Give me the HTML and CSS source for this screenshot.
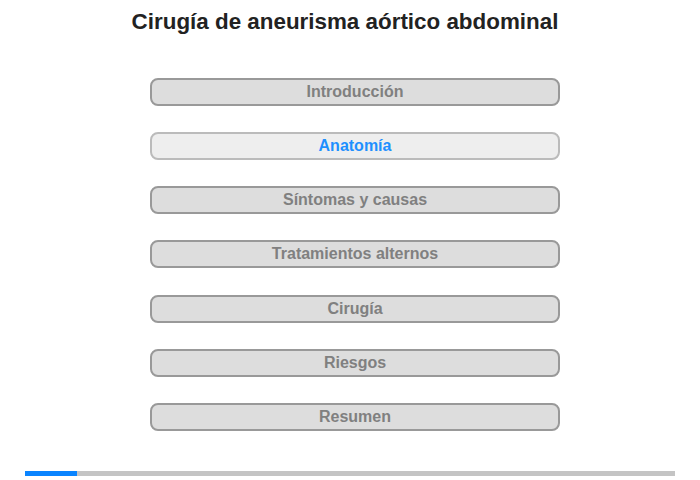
FILE: index.html
```html
<!DOCTYPE html>
<html lang="es">
<head>
<meta charset="utf-8">
<link rel="stylesheet" href="styles.css">
</head>
<body>
<div class="page">
  <h1 class="title">Cirugía de aneurisma aórtico abdominal</h1>
  <nav class="menu">
    <div class="item">Introducción</div>
    <div class="item active">Anatomía</div>
    <div class="item">Síntomas y causas</div>
    <div class="item">Tratamientos alternos</div>
    <div class="item">Cirugía</div>
    <div class="item">Riesgos</div>
    <div class="item">Resumen</div>
  </nav>
  <div class="progress"><div class="progress-fill" style="width:52px"></div></div>
</div>
</body>
</html>
```

FILE: styles.css
```css
html, body {
  margin: 0;
  padding: 0;
  background: #fff;
}
.page {
  width: 700px;
  height: 480px;
  font-family: "Liberation Sans", Arial, sans-serif;
  display: flex;
  flex-direction: column;
}
.title {
  margin: 8px 0 0 0;
  padding-right: 10px;
  font-size: 22.4px;
  line-height: 28px;
  font-weight: bold;
  color: #222;
  text-align: center;
}
.menu {
  margin: 42px 0 0 150px;
  width: 410px;
  display: flex;
  flex-direction: column;
  gap: 26.17px;
}
.item {
  box-sizing: border-box;
  height: 28px;
  border: 2px solid #999;
  border-radius: 8px;
  background: #ddd;
  color: #808080;
  font-size: 16px;
  font-weight: bold;
  line-height: 24px;
  text-align: center;
}
.item.active {
  border-color: #bbb;
  background: #eee;
  color: #1e90ff;
}
.progress {
  margin: 40px 0 0 25px;
  width: 650px;
  height: 5px;
  background: #c4c4c4;
}
.progress-fill {
  height: 100%;
  background: #0a84ff;
}
```
